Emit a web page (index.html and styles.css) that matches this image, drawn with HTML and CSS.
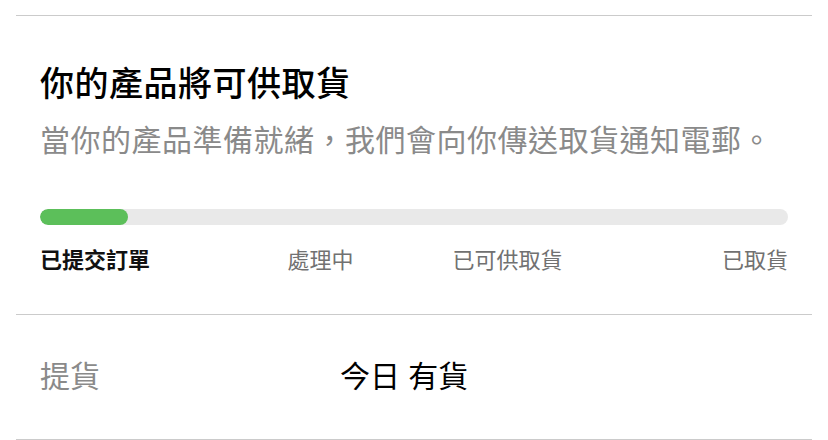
FILE: index.html
```html
<!DOCTYPE html>
<html lang="zh-Hant">
<head>
    <meta charset="UTF-8">
    <meta name="viewport" content="width=device-width, initial-scale=1.0">
    <title>取貨狀態</title>
    <link rel="stylesheet" href="styles.css">
</head>
<body>
    <!-- 取貨進度 -->
    <div class="status">
        <h2 class="title">你的產品將可供取貨</h2>
        <p class="desc">當你的產品準備就緒，我們會向你傳送取貨通知電郵。</p>

        <div class="track">
            <div class="fill" style="width: 88px;"></div>
        </div>

        <div class="steps">
            <span class="step active">已提交訂單</span>
            <span class="step">處理中</span>
            <span class="step">已可供取貨</span>
            <span class="step">已取貨</span>
        </div>
    </div>

    <!-- 提貨資料 -->
    <div class="row">
        <span class="label">提貨</span>
        <span class="value">今日 有貨</span>
    </div>
</body>
</html>
```

FILE: styles.css
```css
* {
    margin: 0;
    padding: 0;
    box-sizing: border-box;
}

body {
    padding: 15px 16px 0;
    background-color: #fff;
    font-family: "Liberation Sans", "Noto Sans CJK TC", sans-serif;
    color: #000;
}

.status {
    border-top: 1px solid #cbcbcb;
    padding: 47px 24px 40px;
}

.title {
    font-size: 34px;
    line-height: 42px;
    font-weight: 500;
    letter-spacing: 0.5px;
}

.desc {
    margin-top: 18px;
    font-size: 30px;
    line-height: 36px;
    letter-spacing: 0.5px;
    color: #8a8a8a;
}

.track {
    margin-top: 50px;
    height: 16px;
    border-radius: 8px;
    background-color: #e9e9e9;
    overflow: hidden;
}

.fill {
    height: 100%;
    border-radius: 8px;
    background-color: #5cbf5a;
}

/* 四個階段平均分佈，首尾靠邊 */
.steps {
    margin-top: 23px;
    display: grid;
    grid-template-columns: repeat(4, 1fr);
    font-size: 22px;
    line-height: 26px;
    color: #717171;
}

.step {
    text-align: center;
}

.step:first-child {
    text-align: left;
}

.step:last-child {
    text-align: right;
}

.step.active {
    color: #111;
    font-weight: 700;
}

.row {
    display: flex;
    align-items: center;
    border-top: 1px solid #cbcbcb;
    border-bottom: 1px solid #cbcbcb;
    padding: 44px 24px;
    font-size: 30px;
    line-height: 36px;
}

.label {
    width: 300px;
    color: #8a8a8a;
}

.value {
    color: #000;
}
```
